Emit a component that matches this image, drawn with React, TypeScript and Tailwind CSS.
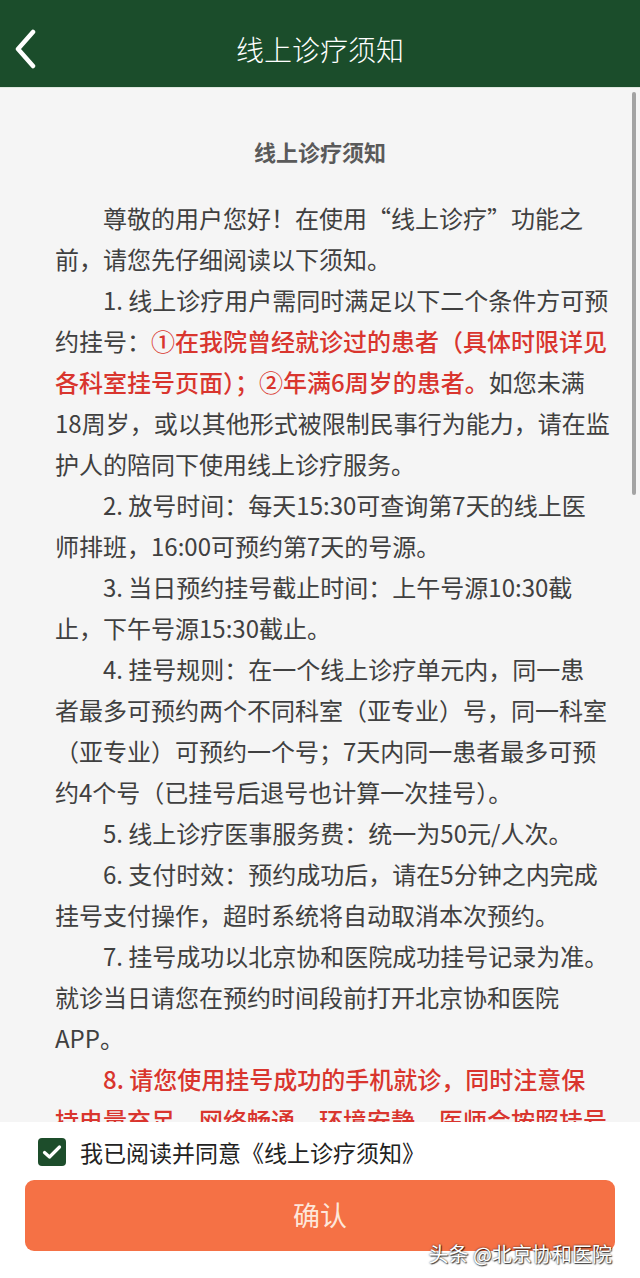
import React from "react";

type Seg = { t: string; red?: boolean };
type Line = Seg[];

const r = (t: string): Seg => ({ t, red: true });
const n = (t: string): Seg => ({ t });

// each paragraph: list of lines, first line gets the 2em indent
const paragraphs: { lines: Line[] }[] = [
  {
    lines: [
      [n("尊敬的用户您好！在使用“线上诊疗”功能之")],
      [n("前，请您先仔细阅读以下须知。")],
    ],
  },
  {
    lines: [
      [n("1. 线上诊疗用户需同时满足以下二个条件方可预")],
      [n("约挂号："), r("①在我院曾经就诊过的患者（具体时限详见")],
      [r("各科室挂号页面）；②年满6周岁的患者。"), n("如您未满")],
      [n("18周岁，或以其他形式被限制民事行为能力，请在监")],
      [n("护人的陪同下使用线上诊疗服务。")],
    ],
  },
  {
    lines: [
      [n("2. 放号时间：每天15:30可查询第7天的线上医")],
      [n("师排班，16:00可预约第7天的号源。")],
    ],
  },
  {
    lines: [
      [n("3. 当日预约挂号截止时间：上午号源10:30截")],
      [n("止，下午号源15:30截止。")],
    ],
  },
  {
    lines: [
      [n("4. 挂号规则：在一个线上诊疗单元内，同一患")],
      [n("者最多可预约两个不同科室（亚专业）号，同一科室")],
      [n("（亚专业）可预约一个号；7天内同一患者最多可预")],
      [n("约4个号（已挂号后退号也计算一次挂号）。")],
    ],
  },
  {
    lines: [[n("5. 线上诊疗医事服务费：统一为50元/人次。")]],
  },
  {
    lines: [
      [n("6. 支付时效：预约成功后，请在5分钟之内完成")],
      [n("挂号支付操作，超时系统将自动取消本次预约。")],
    ],
  },
  {
    lines: [
      [n("7. 挂号成功以北京协和医院成功挂号记录为准。")],
      [n("就诊当日请您在预约时间段前打开北京协和医院")],
      [n("APP。")],
    ],
  },
  {
    lines: [
      [r("8. 请您使用挂号成功的手机就诊，同时注意保")],
      [r("持电量充足，网络畅通，环境安静，医师会按照挂号")],
    ],
  },
];

const font = { fontFamily: '"Noto Sans CJK SC", "Noto Sans", sans-serif' };

export default function App() {
  return (
    <div className="relative w-[640px] h-[1278px] overflow-hidden bg-white" style={font}>
      {/* header */}
      <div className="relative h-[88px] bg-[#1b4d2b] border-b border-[#dfe7df] flex items-center justify-center">
        <button className="absolute left-[10px] top-[26px] w-[32px] h-[46px] flex items-center justify-center">
          <svg width="24" height="40" viewBox="0 0 24 40" fill="none">
            <path d="M19 3 L4 20 L19 37" stroke="white" strokeWidth="4.5" strokeLinecap="round" strokeLinejoin="round" />
          </svg>
        </button>
        <h1 className="text-[28px] text-white font-light leading-none pt-[10px]">线上诊疗须知</h1>
      </div>

      {/* content, scrolled list clipped by the footer */}
      <div className="relative h-[1034px] overflow-hidden bg-[#f5f5f5] px-[55px] pt-[43px]">
        <h2 className="text-center text-[22px] leading-[41px] font-bold text-[#5a5a5a]">线上诊疗须知</h2>
        <div className="mt-[25px] text-[24px] leading-[41px] text-[#404040]">
          {paragraphs.map((p, pi) => (
            <div key={pi}>
              {p.lines.map((line, li) => (
                <div key={li} className={`whitespace-nowrap ${li === 0 ? "pl-[48px]" : ""}`}>
                  {line.map((s, si) => (
                    <span key={si} className={s.red ? "text-[#d9352e] font-medium" : ""}>
                      {s.t}
                    </span>
                  ))}
                </div>
              ))}
            </div>
          ))}
        </div>
        {/* scrollbar */}
        <div className="absolute right-[4px] top-[4px] w-[4px] h-[403px] rounded-full bg-[#a3a3a3]" />
      </div>

      {/* footer */}
      <div className="bg-white px-[25px] pt-[15px]">
        <label className="flex items-center gap-[14px] pl-[13px] h-[30px]">
          <span className="w-[28px] h-[28px] rounded-[4px] bg-[#1d4d2b] flex items-center justify-center">
            <svg width="20" height="16" viewBox="0 0 20 16" fill="none">
              <path d="M2.5 8.5 L7.5 13 L17.5 3" stroke="white" strokeWidth="3.2" strokeLinecap="round" strokeLinejoin="round" />
            </svg>
          </span>
          <span className="text-[23px] text-[#222] leading-[30px]">我已阅读并同意《线上诊疗须知》</span>
        </label>
        <button className="mt-[13px] w-[590px] h-[71px] rounded-[9px] bg-[#f57145] text-[#fde6da] text-[27px] flex items-center justify-center">
          确认
        </button>
      </div>

      {/* watermark */}
      <div className="absolute right-[28px] top-[1244px] text-[20px] leading-none text-white [text-shadow:0_0_2px_rgba(0,0,0,0.8),1px_1px_1px_rgba(0,0,0,0.7)]">
        头条 @北京协和医院
      </div>
    </div>
  );
}
